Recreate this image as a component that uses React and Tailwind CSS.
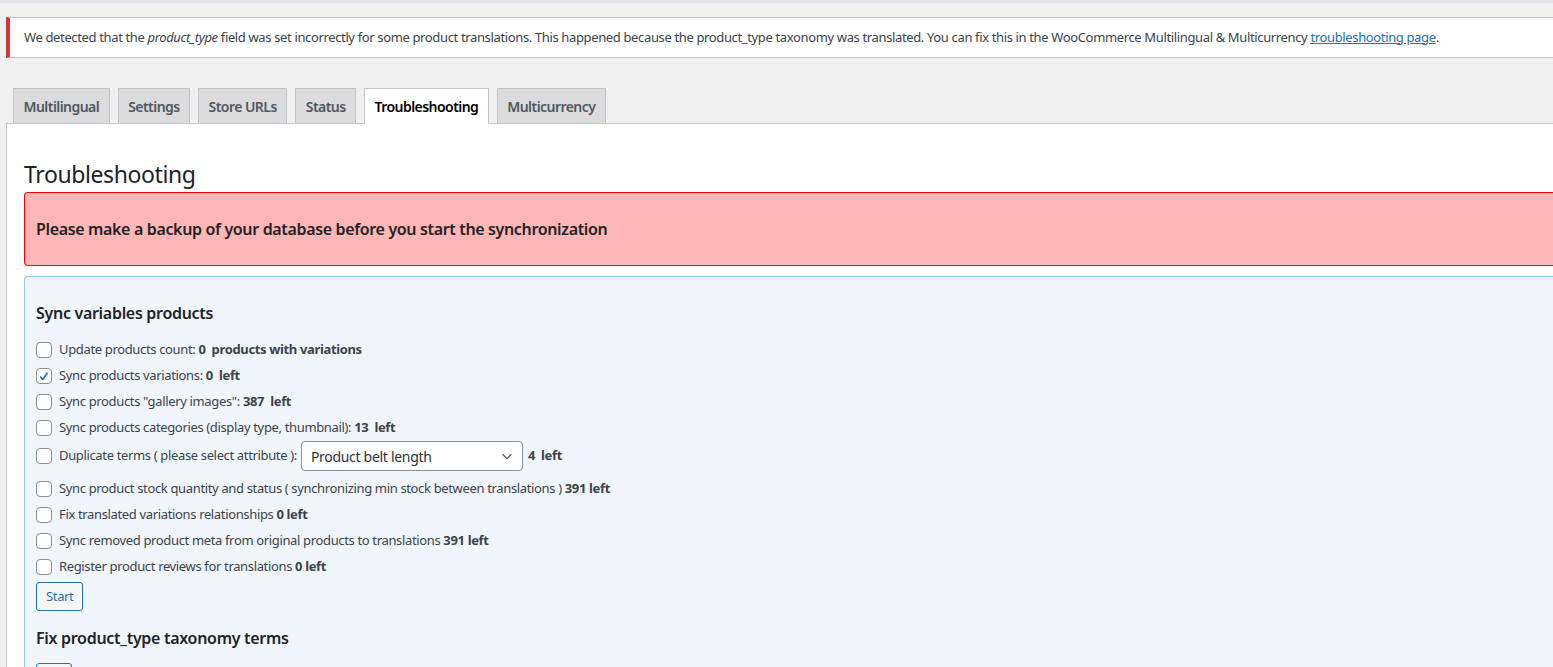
import { useState } from 'react'

const rows = [
  { label: 'Update products count: ', bold: '0  products with variations' },
  { label: 'Sync products variations: ', bold: '0  left' },
  { label: 'Sync products "gallery images": ', bold: '387  left' },
  { label: 'Sync products categories (display type, thumbnail): ', bold: '13  left' },
]

const rows2 = [
  { label: 'Sync product stock quantity and status ( synchronizing min stock between translations ) ', bold: '391 left' },
  { label: 'Fix translated variations relationships ', bold: '0 left' },
  { label: 'Sync removed product meta from original products to translations ', bold: '391 left' },
  { label: 'Register product reviews for translations ', bold: '0 left' },
]

const tabs = ['Multilingual', 'Settings', 'Store URLs', 'Status', 'Troubleshooting', 'Multicurrency']

function Checkbox({ checked, onChange }) {
  return (
    <button
      onClick={onChange}
      className="w-4 h-4 shrink-0 rounded-[4px] border border-[#8c8f94] bg-white flex items-center justify-center"
    >
      {checked && (
        <svg viewBox="0 0 20 20" className="w-[15px] h-[15px]">
          <path d="M4.5 10 L8.2 14 L15 4.5" fill="none" stroke="#2271b1" strokeWidth="2.4" />
        </svg>
      )}
    </button>
  )
}

function Row({ row, checked, onToggle }) {
  return (
    <div className="flex items-center h-[26px]">
      <Checkbox checked={checked} onChange={onToggle} />
      <span className="ml-[7px]">
        {row.label}
        <b className="font-bold whitespace-pre">{row.bold}</b>
      </span>
    </div>
  )
}

export default function App() {
  const [checks, setChecks] = useState({ 1: true })
  const toggle = (k) => setChecks({ ...checks, [k]: !checks[k] })

  return (
    <div
      className="min-h-screen bg-[#f0f0f1] text-[13px] text-[#3c434a] overflow-hidden"
      style={{ fontFamily: '"Noto Sans", "Open Sans", sans-serif' }}
    >
      <div className="h-[3px] bg-[#e4e2ea]" />

      <div className="pl-[6px]">
        {/* NOTICE */}
        <div className="mt-[14px] bg-white border-y border-[#c3c4c7] border-l-4 border-l-[#d63638] h-[41px] flex items-center pl-[14px] whitespace-nowrap tracking-[-0.36px]">
          <p>
            We detected that the <i>product_type</i> field was set incorrectly for some product translations. This happened because the product_type taxonomy was translated. You can fix this in the WooCommerce Multilingual &amp; Multicurrency{' '}
            <a href="#" className="text-[#2271b1] underline">troubleshooting page</a>.
          </p>
        </div>

        {/* TABS */}
        <div className="mt-[30px] flex items-end pl-[7px] gap-[8px] h-[35px]">
          {tabs.map((t) => (
            <div
              key={t}
              className={
                t === 'Troubleshooting'
                  ? 'h-[36px] -mb-px px-[9.5px] flex items-center border border-b-0 border-[#c3c4c7] bg-white text-black text-[14px] font-semibold tracking-[-0.55px] relative z-10'
                  : 'h-[35px] px-[9.5px] flex items-center border border-b-0 border-[#c3c4c7] bg-[#dcdcde] text-[#50575e] text-[14px] font-semibold tracking-[-0.55px]'
              }
            >
              {t}
            </div>
          ))}
        </div>

        {/* PANEL */}
        <div className="bg-white border-t border-l border-[#c3c4c7] pl-[17px] pt-[35px] min-h-[600px]">
          <h2 className="text-[23px] leading-[30px] text-[#1d2327] font-normal tracking-[-0.4px]">Troubleshooting</h2>

          <div className="mt-[3px] h-[74px] bg-[#ffb6b6] border border-[#ff0000] rounded-l-[4px] border-r-0 flex items-center pl-[11px]">
            <p className="text-[16px] font-semibold text-[#1d2327] tracking-[-0.35px]">
              Please make a backup of your database before you start the synchronization
            </p>
          </div>

          <div className="mt-[10px] bg-[#f0f6fc] border border-r-0 border-[#8ecfe9] rounded-l-[4px] pl-[11px] pt-[25px] pb-[20px] tracking-[-0.35px]">
            <h3 className="text-[16px] font-semibold text-[#1d2327] leading-[22px] tracking-[-0.3px]">Sync variables products</h3>

            <div className="mt-[13px]">
              {rows.map((r, i) => (
                <Row key={i} row={r} checked={!!checks[i]} onToggle={() => toggle(i)} />
              ))}

              <div className="flex items-center h-[30px]">
                <Checkbox checked={!!checks[4]} onChange={() => toggle(4)} />
                <span className="ml-[7px]">Duplicate terms ( please select attribute ):</span>
                <div className="ml-[4px] w-[222px] h-[30px] border border-[#8c8f94] rounded-[4px] bg-white flex items-center justify-between pl-[9px] pr-[8px] text-[14px] text-[#2c3338] tracking-[-0.3px]">
                  <span>Product belt length</span>
                  <svg viewBox="0 0 16 16" className="w-[14px] h-[14px]">
                    <path d="M3 6 L8 11 L13 6" fill="none" stroke="#50575e" strokeWidth="1.5" />
                  </svg>
                </div>
                <b className="ml-[5px] font-bold whitespace-pre">4  left</b>
              </div>

              <div className="h-[5px]" />

              {rows2.map((r, i) => (
                <Row key={i} row={r} checked={!!checks[i + 5]} onToggle={() => toggle(i + 5)} />
              ))}
            </div>

            <button className="mt-[2px] h-[29px] px-[9px] border border-[#2271b1] rounded-[3px] bg-[#f6f7f7] text-[#2271b1] text-[13px]">
              Start
            </button>

            <h3 className="mt-[16px] text-[16px] font-semibold text-[#1d2327] leading-[22px] tracking-[-0.3px]">Fix product_type taxonomy terms</h3>

            <button className="mt-[14px] h-[29px] px-[9px] border border-[#2271b1] rounded-[3px] bg-[#f6f7f7] text-[#2271b1] text-[13px]">
              Fix
            </button>
          </div>
        </div>
      </div>
    </div>
  )
}
